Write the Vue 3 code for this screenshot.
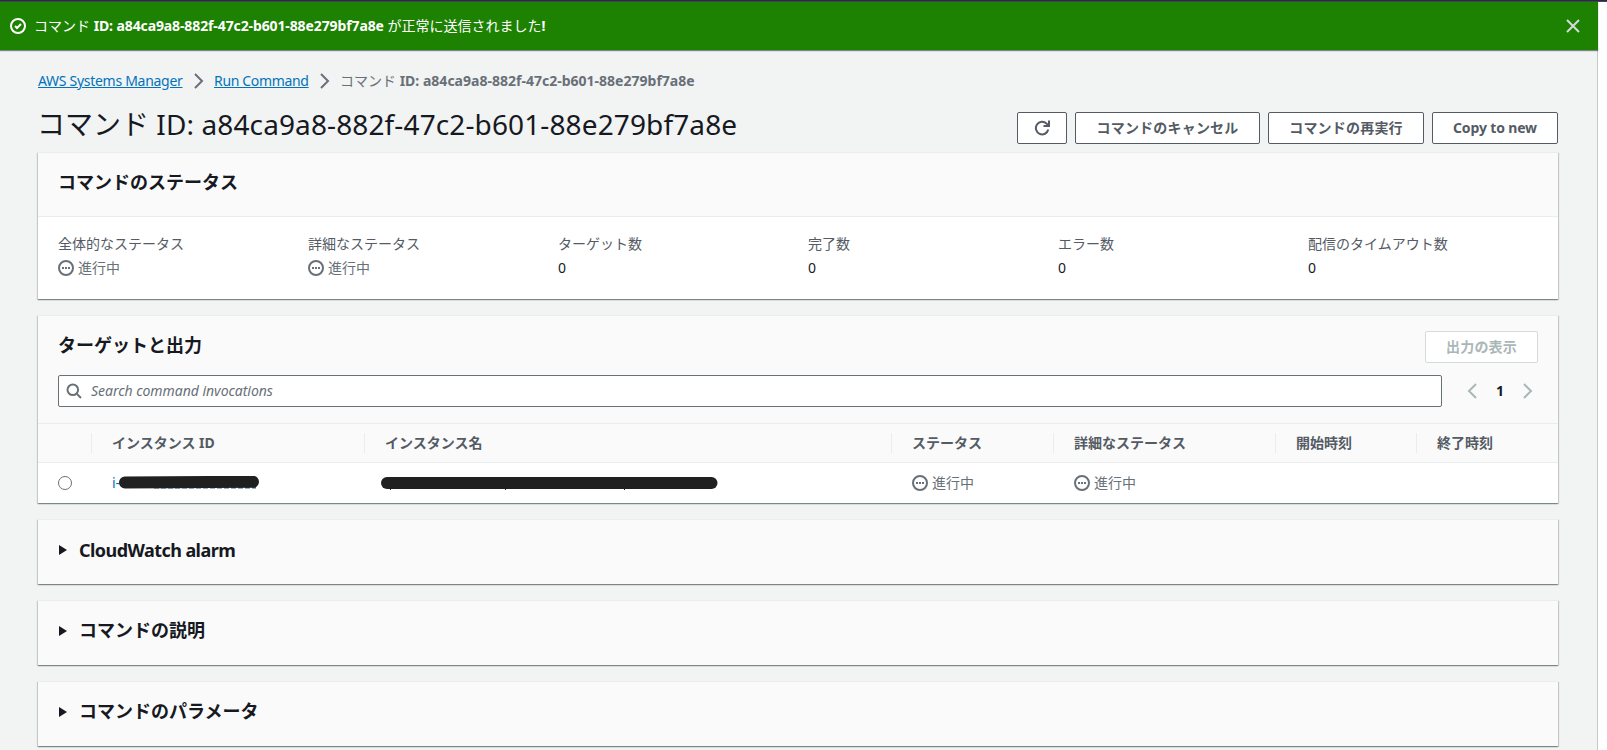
<template>
  <div class="app">
    <div class="top-strip"></div>
    <div class="flash">
      <svg class="icon" viewBox="0 0 16 16"><circle cx="8" cy="8" r="7" /><path d="M5 8l2 2 4-4" /></svg>
      <div class="flash-text">コマンド <b>ID: {{ commandId }}</b> が正常に送信されました<b>!</b></div>
      <svg class="icon flash-close" viewBox="0 0 16 16"><path d="M2 2l12 12M14 2L2 14" /></svg>
    </div>

    <main class="main">
      <nav class="breadcrumb">
        <a class="crumb-aws">AWS Systems Manager</a>
        <svg class="icon sep" viewBox="0 0 16 16"><path d="M4 1l7 7-7 7" /></svg>
        <a class="crumb-run">Run Command</a>
        <svg class="icon sep" viewBox="0 0 16 16"><path d="M4 1l7 7-7 7" /></svg>
        <span class="current">コマンド <b>ID: {{ commandId }}</b></span>
      </nav>

      <div class="page-header">
        <h1>コマンド <span>ID: {{ commandId }}</span></h1>
        <div class="actions">
          <button class="btn refresh">
            <svg class="icon" viewBox="0 0 16 16"><path d="M14.3 9.6A6.3 6.3 0 1 1 12.6 3.6L14 5" /><path d="M15 .5V6H9.5" /></svg>
          </button>
          <button class="btn cancel">コマンドのキャンセル</button>
          <button class="btn rerun">コマンドの再実行</button>
          <button class="btn copy">Copy to new</button>
        </div>
      </div>

      <section class="card">
        <div class="card-header"><h2>コマンドのステータス</h2></div>
        <div class="status-grid">
          <div v-for="s in statuses" :key="s.label">
            <div class="label">{{ s.label }}</div>
            <div v-if="s.pending" class="pending">
              <svg class="icon" viewBox="0 0 16 16"><circle cx="8" cy="8" r="7" /><path d="M4 8h2M7 8h2M10 8h2" /></svg>進行中
            </div>
            <div v-else class="value">0</div>
          </div>
        </div>
      </section>

      <section class="card">
        <div class="tools">
          <div class="tools-title">
            <h2>ターゲットと出力</h2>
            <button class="btn output" disabled>出力の表示</button>
          </div>
          <div class="tools-search">
            <div class="search">
              <svg class="icon" viewBox="0 0 16 16"><circle cx="6.8" cy="6.8" r="5.3" /><path d="M10.6 10.6l4.4 4.4" /></svg>
              <input v-model="keyword" placeholder="Search command invocations" />
            </div>
            <div class="pager">
              <svg class="icon" viewBox="0 0 16 16"><path d="M12 1L5 8l7 7" /></svg>
              <b>1</b>
              <svg class="icon" viewBox="0 0 16 16"><path d="M4 1l7 7-7 7" /></svg>
            </div>
          </div>
        </div>
        <div class="row head">
          <div></div>
          <div v-for="c in columns" :key="c">{{ c }}</div>
        </div>
        <div class="row">
          <div class="select"><input v-model="selected" type="radio" value="0" /></div>
          <div class="instance">
            <a>i-</a>
            <svg class="mask-id" viewBox="0 0 142 14">
              <path class="under" d="M36 11.6h102" />
              <path class="bar" d="M7 6.4L135 5.8" />
            </svg>
          </div>
          <div class="name">
            <svg class="mask-name" viewBox="0 0 337 16">
              <path class="tail" d="M9.5 12v3M124.5 12v3M243.5 12v3" />
              <path class="bar" d="M6 8h324.5" />
            </svg>
          </div>
          <div v-for="n in 2" :key="n" class="pending">
            <svg class="icon" viewBox="0 0 16 16"><circle cx="8" cy="8" r="7" /><path d="M4 8h2M7 8h2M10 8h2" /></svg>進行中
          </div>
          <div></div>
          <div></div>
        </div>
      </section>

      <section v-for="title in panels" :key="title" class="card panel">
        <svg class="caret" viewBox="0 0 8 10"><path d="M0 0l8 5-8 5z" /></svg>
        <h2 :class="{ latin: title === 'CloudWatch alarm' }">{{ title }}</h2>
      </section>
    </main>
  </div>
</template>

<script setup>
import { ref } from 'vue';

const commandId = 'a84ca9a8-882f-47c2-b601-88e279bf7a8e';
const keyword = ref('');
const selected = ref(null);

const statuses = [
  { label: '全体的なステータス', pending: true },
  { label: '詳細なステータス', pending: true },
  { label: 'ターゲット数' },
  { label: '完了数' },
  { label: 'エラー数' },
  { label: '配信のタイムアウト数' }
];

const columns = ['インスタンス ID', 'インスタンス名', 'ステータス', '詳細なステータス', '開始時刻', '終了時刻'];
const panels = ['CloudWatch alarm', 'コマンドの説明', 'コマンドのパラメータ'];
</script>

<style>
body { margin: 0; overflow: hidden; background: #fff; }
</style>

<style scoped>
* { box-sizing: border-box; }
.app { height: 750px; overflow: hidden; font: 14px/22px "Noto Sans", "Noto Sans CJK JP", sans-serif; color: #16191f; }
h1, h2 { margin: 0; }
.icon { width: 16px; height: 16px; flex: none; fill: none; stroke: currentColor; stroke-width: 2; }

.top-strip { height: 2px; background: #232f3e; border-bottom: 1px solid #414750; }
.flash { position: relative; display: flex; align-items: center; width: 1598px; height: 48px; padding: 0 17px 0 10px; background: #1d8102; color: #fff; box-shadow: 0 1px 1px rgba(0, 28, 36, .5); }
.flash-text { flex: 1; margin-left: 8px; white-space: nowrap; }
.flash-text b { letter-spacing: -0.11px; }
.flash-close { color: #d5dbdb; }

.main { width: 1598px; height: 700px; padding: 20px 39px 0 38px; background: #f2f3f3; border-right: 1px solid #c4caca; }
.breadcrumb { display: flex; align-items: center; height: 22px; color: #687078; white-space: nowrap; }
.breadcrumb a { color: #0073bb; text-decoration: underline; }
.crumb-aws { width: 145px; letter-spacing: -0.29px; }
.crumb-run { width: 95px; letter-spacing: -0.33px; }
.sep { margin: 0 7px 0 8px; }
.current b { letter-spacing: 0.01px; }

.page-header { display: flex; justify-content: space-between; height: 60px; }
h1 { margin-left: -1px; font-size: 28px; line-height: 36px; font-weight: 400; padding-top: 14px; white-space: nowrap; }
h1 span { letter-spacing: 0.12px; }
.actions { display: flex; gap: 8px; padding-top: 20px; }
.btn { height: 32px; padding: 0; display: flex; align-items: center; justify-content: center; font: bold 14px/20px "Noto Sans", "Noto Sans CJK JP", sans-serif; letter-spacing: .2px; color: #545b64; background: #fff; border: 1px solid #545b64; border-radius: 2px; white-space: nowrap; }
.btn:disabled { color: #aab7b8; border-color: #d5dbdb; }
.refresh { width: 50px; }
.cancel { width: 185px; }
.rerun { width: 156px; }
.copy { width: 126px; letter-spacing: -0.15px; }
.output { width: 113px; }

.card { margin-bottom: 16px; background: #fff; border-top: 1px solid #eaeded; box-shadow: 0 1px 1px 0 rgba(0, 28, 36, .3), 1px 1px 1px 0 rgba(0, 28, 36, .15), -1px 1px 1px 0 rgba(0, 28, 36, .15); }
.card-header { height: 64px; padding: 18px 20px 0; background: #fafafa; border-bottom: 1px solid #eaeded; }
h2 { font-size: 18px; line-height: 22px; font-weight: 700; }
.status-grid { display: grid; grid-template-columns: repeat(6, 250px); height: 82px; padding: 16px 0 0 20px; }
.label { margin-bottom: 2px; color: #545b64; }
.pending { display: flex; align-items: center; gap: 4px; color: #687078; }

.tools { height: 107px; padding: 15px 20px 0; background: #fafafa; }
.tools-title { display: flex; justify-content: space-between; height: 44px; }
.tools-title h2 { padding-top: 3px; }
.tools-search { display: flex; justify-content: space-between; }
.search { display: flex; align-items: center; width: 1384px; height: 32px; padding-left: 7px; background: #fff; border: 1px solid #687078; border-radius: 2px; color: #687078; }
.search input { width: 600px; margin-left: 9px; padding: 0; border: 0; outline: 0; background: none; font: 14px/22px "Noto Sans", "Noto Sans CJK JP", sans-serif; letter-spacing: -0.03px; }
.search input::placeholder { color: #687078; font-style: italic; }
.pager { display: flex; align-items: center; justify-content: space-between; width: 72px; margin-right: 2px; color: #aab7b8; }
.pager b { color: #16191f; }

.row { display: grid; grid-template-columns: 54px 273px 527px 162px 222px 141px 141px; align-items: center; height: 40px; }
.row > div { padding-left: 20px; }
.row.head { height: 40px; background: #fafafa; border-top: 1px solid #eaeded; border-bottom: 1px solid #eaeded; color: #545b64; font-weight: 700; }
.row.head > div { height: 20px; line-height: 20px; border-right: 1px solid #eaeded; }
.row.head > div:last-child { border-right: 0; }
.select { display: flex; }
.select input { appearance: none; width: 14px; height: 14px; margin: 0; border: 1px solid #687078; border-radius: 50%; background: #fff; }
.instance { display: flex; align-items: center; color: #0073bb; }
.mask-id { width: 142px; height: 14px; margin-left: -2px; }
.row > .name { display: flex; padding-left: 16px; }
.mask-name { width: 337px; height: 16px; }
.bar { fill: none; stroke: #202020; stroke-width: 12; stroke-linecap: round; }
.under { fill: none; stroke: #3b6d8c; stroke-width: 2; stroke-dasharray: 5 2; }
.tail { fill: none; stroke: #202020; stroke-width: 1; }

.panel { display: flex; height: 65px; padding: 18px 0 0 21px; background: #fafafa; }
.caret { width: 8px; height: 10px; margin: 7px 12px 0 0; fill: #16191f; }
.latin { padding-top: 1px; letter-spacing: -0.56px; }
</style>
